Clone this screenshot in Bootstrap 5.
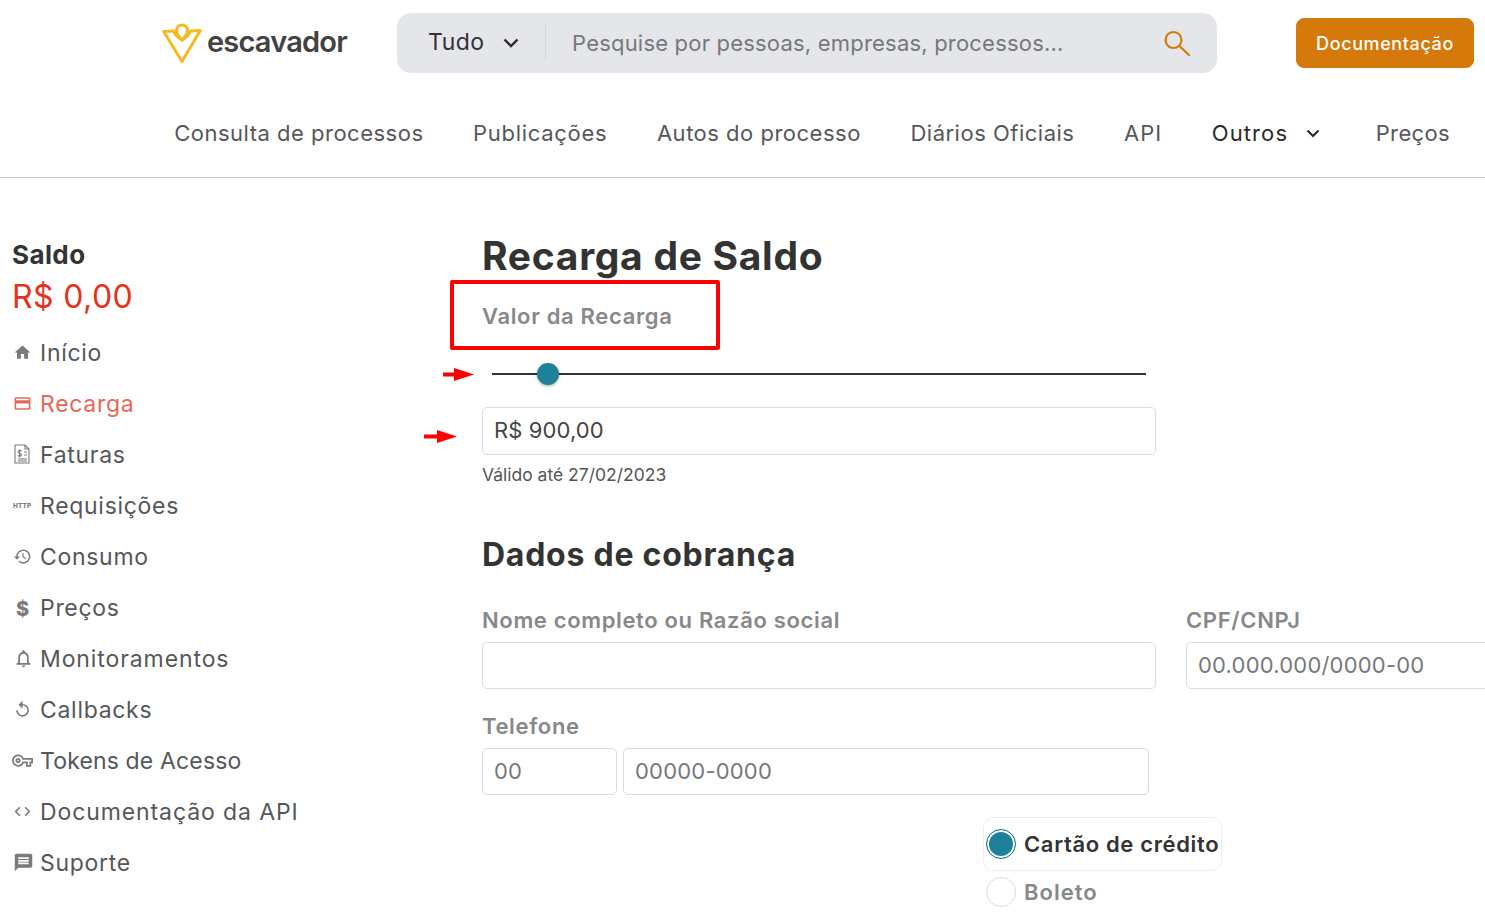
<!DOCTYPE html>
<html lang="pt-BR">
<head>
<meta charset="utf-8">
<title>Recarga de Saldo</title>
<link href="https://cdn.jsdelivr.net/npm/bootstrap@5.3.0/dist/css/bootstrap.min.css" rel="stylesheet">
<style>
html,body{height:916px;overflow:hidden}
body{font-family:"Inter","Liberation Sans",sans-serif;font-size:22px;letter-spacing:.4px;color:#333;background:#fff;position:relative;width:1485px}
.top-row{height:86px;padding-left:162px}
.logo-box{width:235px;gap:5px}
.logo-word{font-size:29px;font-weight:600;color:#424242;letter-spacing:-.8px;line-height:1;margin-top:-3px}
.search-box{width:820px;height:60px;background:#e5e6ea;border-radius:14px;margin-top:-1px}
.search-cat{width:149px;padding-left:31px;color:#333;gap:18px;border-right:1px solid #d3d4d8;height:36px;font-size:23px;letter-spacing:.5px}
.search-text{padding-left:26px;padding-top:2px;color:#77787c;flex:1;letter-spacing:.2px}
.search-ico{margin-right:27px}
.doc-btn{width:178px;height:50px;margin-left:79px;background:#d4790a;border-color:#d4790a;color:#fff;font-size:18px;letter-spacing:.6px;font-weight:500;border-radius:8px;padding:0}
.nav-row{height:92px;border-bottom:1px solid #c6c8cc;padding-right:35px;padding-top:4px;gap:49.6px}
.nav-lnk{color:#56575b;text-decoration:none;white-space:nowrap;padding:0;letter-spacing:.5px}
.nav-lnk.wide-a{letter-spacing:.7px}
.nav-lnk.wide-b{letter-spacing:1px}
.nav-lnk.last-p{letter-spacing:.35px}
.nav-lnk.outros{color:#2b2b2b;gap:18px;margin-right:6px;letter-spacing:1.1px}
.layout{padding-top:50px}
.side-col{width:482px;flex:none;padding-left:12px}
.saldo-t{font-size:26px;font-weight:700;color:#333;line-height:30px;margin-top:12px}
.saldo-v{font-size:32px;color:#e5321e;line-height:40px;margin-top:7px;margin-bottom:11px}
.side-item{height:51px;color:#56575b;text-decoration:none;white-space:nowrap;font-size:23px;letter-spacing:.7px}
.side-item.on{color:#e4685a}
.side-item.tight{letter-spacing:.15px}
.side-item.loose{letter-spacing:.9px}
.side-ico{width:28px;flex:none;color:#7b7b7b;display:flex;align-items:center;padding-left:1px;margin-top:-3px;letter-spacing:0}
.on .side-ico{color:#e4685a}
.http-ico{font-size:6.5px;font-weight:800;letter-spacing:.1px;color:#7b7b7b;margin-top:3px}
.dollar-ico{font-size:20px;font-weight:800;padding-left:3px;line-height:1;margin-top:3px}
.key-ico{margin-left:-1px}
.main-col{width:1003px;flex:none}
.page-title{font-size:39px;font-weight:700;color:#333;line-height:46px;margin:5px 0 0;letter-spacing:.7px}
.fld-label{font-size:22px;font-weight:600;color:#87888a;line-height:28px;margin:0;letter-spacing:.65px}
.val-label{margin-top:23px;margin-bottom:33px}
.range-wrap{width:674px;padding-left:10px;padding-right:10px;height:22px;margin-bottom:22px}
.range-wrap .form-range{display:block;height:22px;padding:0}
.form-range::-webkit-slider-runnable-track{height:2px;background:#333;border-radius:0}
.form-range::-webkit-slider-thumb{width:22px;height:22px;margin-top:-10px;background:#1f8199;box-shadow:0 1px 3px rgba(0,0,0,.35);border-radius:50%}
.txt-in{height:47px;border:1px solid #dcdcdc;border-radius:5px;font-size:22px;letter-spacing:.2px;padding:0 11px 2px;color:#444;box-shadow:none}
.txt-in.tall{height:48px;letter-spacing:.1px}
.txt-in::placeholder{color:#77787c;opacity:1}
.w-main{width:674px;flex:none}
.valid-note{font-size:17.5px;letter-spacing:0;color:#555;line-height:24px;margin-top:8px}
.sec-title{font-size:32px;font-weight:700;color:#333;line-height:38px;margin:49px 0 0;letter-spacing:.75px}
.form-line{gap:30px;margin-top:32px}
.w-cpf{width:320px;flex:none}
.fld-label.mb8{margin-bottom:8px}
.tel-block{margin-top:23px}
.tel-line{gap:6px}
.w-ddd{width:135px;flex:none}
.w-tel{width:526px;flex:none}
.pay-list{margin-left:501px;margin-top:22px;width:239px}
.pay-opt{height:54px;gap:8px;padding-left:2px;border:1px dotted #dcdcdc;border-radius:10px;margin:0;font-size:22px;font-weight:600;letter-spacing:.65px;color:#333;white-space:nowrap;min-height:0}
.pay-opt.off{border-color:transparent;height:42px;color:#87888a;letter-spacing:1px}
.pay-opt .form-check-input{width:30px;height:30px;margin:0;float:none;flex:none;background:#fff;border:1px solid #dcdcdc;box-shadow:none;background-image:none}
.pay-opt .form-check-input:checked{border-color:#1f8199;background:#1f8199;box-shadow:inset 0 0 0 2px #fff}
.mark-box{position:absolute;left:450px;top:280px;width:270px;height:70px;border:4px solid #f00;border-radius:2px}
.mark-arrow{position:absolute}
</style>
</head>
<body>
<header>
  <div class="top-row d-flex align-items-center">
    <a class="logo-box d-flex align-items-center text-decoration-none" href="#">
      <svg width="40" height="40" viewBox="0 0 40 40" fill="none" stroke="#f5b921" stroke-width="3" stroke-linejoin="round" stroke-linecap="round"><path d="M1.700 8.500 11.500 8C13 12 16.500 15 20 17 23.500 15 27 12 28.500 8L38.300 7.500 20 38.500Z"/><path d="M20 2C16.800 2 14.500 4.300 14.500 7.500 14.500 11 17.500 14.500 20 17 22.500 14.500 25.500 11 25.500 7.500 25.500 4.300 23.200 2 20 2Z"/></svg>
      <span class="logo-word">escavador</span>
    </a>
    <div class="search-box d-flex align-items-center">
      <div class="search-cat d-flex align-items-center">
        <span>Tudo</span>
        <svg width="16" height="10" viewBox="0 0 16 10" fill="none" stroke="#2b2b2b" stroke-width="2.400"><path d="M1.500 1.500 8 8 14.500 1.500"/></svg>
      </div>
      <div class="search-text">Pesquise por pessoas, empresas, processos...</div>
      <svg class="search-ico" width="26" height="26" viewBox="0 0 26 26" fill="none" stroke="#d4790a" stroke-width="2.200" stroke-linecap="round"><circle cx="9.500" cy="10" r="8"/><path d="M15.500 16 25 25"/></svg>
    </div>
    <button class="btn doc-btn" type="button">Documentação</button>
  </div>
  <nav class="nav-row d-flex align-items-center justify-content-end">
    <a class="nav-lnk" href="#">Consulta de processos</a>
    <a class="nav-lnk wide-a" href="#">Publicações</a>
    <a class="nav-lnk" href="#">Autos do processo</a>
    <a class="nav-lnk" href="#">Diários Oficiais</a>
    <a class="nav-lnk wide-b" href="#">API</a>
    <a class="nav-lnk outros d-flex align-items-center" href="#">Outros
      <svg width="14" height="9" viewBox="0 0 14 9" fill="none" stroke="#2b2b2b" stroke-width="2.200"><path d="M1.500 1.500 7 7 12.500 1.500"/></svg>
    </a>
    <a class="nav-lnk last-p" href="#">Preços</a>
  </nav>
</header>
<div class="layout d-flex">
  <aside class="side-col">
    <div class="saldo-t">Saldo</div>
    <div class="saldo-v">R$ 0,00</div>
    <a class="side-item d-flex align-items-center" href="#"><span class="side-ico"><svg width="19" height="19" viewBox="0 0 24 24" fill="currentColor"><path d="M10 20v-6h4v6h5v-8h3L12 3 2 12h3v8z"/></svg></span>Início</a>
    <a class="side-item on d-flex align-items-center" href="#"><span class="side-ico"><svg width="19" height="19" viewBox="0 0 24 24" fill="currentColor"><path d="M20 4H4c-1.110 0-2 .89-2 2v12c0 1.110.89 2 2 2h16c1.110 0 2-.89 2-2V6c0-1.110-.89-2-2-2zm0 14H4v-6h16v6zm0-10H4V6h16v2z"/></svg></span>Recarga</a>
    <a class="side-item d-flex align-items-center" href="#"><span class="side-ico"><svg width="18" height="20" viewBox="0 0 18 20" fill="none" stroke="currentColor" stroke-width="1.100"><path d="M2 1h10l4 4v14H2Z"/><path d="M12 1v4h4M11 8h3M11 11h3M5 15h9M5 17h9"/><path d="M8.500 7C7.500 6 5 6.200 5 7.800 5 9.500 8.500 9 8.500 10.800 8.500 12.300 6 12.500 5 11.500M6.700 5.500v8"/></svg></span>Faturas</a>
    <a class="side-item d-flex align-items-center" href="#"><span class="side-ico"><span class="http-ico">HTTP</span></span>Requisições</a>
    <a class="side-item d-flex align-items-center" href="#"><span class="side-ico"><svg width="19" height="19" viewBox="0 0 24 24" fill="currentColor"><path d="M13 3a9 9 0 0 0-9 9H1l3.890 3.890.07.14L9 12H6c0-3.870 3.130-7 7-7s7 3.130 7 7-3.130 7-7 7c-1.930 0-3.680-.79-4.940-2.060l-1.420 1.420A8.954 8.954 0 0 0 13 21a9 9 0 0 0 0-18zm-1 5v5l4.280 2.540.72-1.210-3.500-2.080V8H12z"/></svg></span>Consumo</a>
    <a class="side-item d-flex align-items-center" href="#"><span class="side-ico"><span class="dollar-ico">$</span></span>Preços</a>
    <a class="side-item loose d-flex align-items-center" href="#"><span class="side-ico"><svg width="21" height="21" viewBox="0 0 24 24" fill="currentColor"><path d="M12 22c1.100 0 2-.9 2-2h-4c0 1.100.9 2 2 2zm6-6v-5c0-3.070-1.630-5.640-4.500-6.320V4c0-.83-.67-1.500-1.500-1.500s-1.500.67-1.500 1.500v.68C7.640 5.360 6 7.920 6 11v5l-2 2v1h16v-1l-2-2zm-2 1H8v-6c0-2.480 1.510-4.500 4-4.500s4 2.020 4 4.500v6z"/></svg></span>Monitoramentos</a>
    <a class="side-item d-flex align-items-center" href="#"><span class="side-ico"><svg width="19" height="19" viewBox="0 0 24 24" fill="currentColor"><path d="M12 5V1L7 6l5 5V7c3.310 0 6 2.690 6 6s-2.690 6-6 6-6-2.690-6-6H4c0 4.420 3.580 8 8 8s8-3.580 8-8-3.580-8-8-8z"/></svg></span>Callbacks</a>
    <a class="side-item tight d-flex align-items-center" href="#"><span class="side-ico"><svg class="key-ico" width="21" height="21" viewBox="0 0 24 24" fill="currentColor"><path d="M22 19h-6v-4h-2.680c-1.140 2.420-3.600 4-6.320 4-3.860 0-7-3.140-7-7s3.140-7 7-7c2.720 0 5.170 1.580 6.320 4H24v6h-2v4zm-4-2h2v-4h2v-2H11.940l-.23-.67C11.010 8.340 9.110 7 7 7c-2.760 0-5 2.240-5 5s2.240 5 5 5c2.110 0 4.010-1.340 4.710-3.330l.23-.67H18v4zM7 15c-1.650 0-3-1.350-3-3s1.350-3 3-3 3 1.350 3 3-1.350 3-3 3zm0-4c-.55 0-1 .45-1 1s.45 1 1 1 1-.45 1-1-.45-1-1-1z"/></svg></span>Tokens de Acesso</a>
    <a class="side-item loose d-flex align-items-center" href="#"><span class="side-ico"><svg width="19" height="19" viewBox="0 0 24 24" fill="currentColor"><path d="M9.400 16.600 4.800 12l4.600-4.600L8 6l-6 6 6 6 1.400-1.400zm5.200 0 4.600-4.600-4.600-4.600L16 6l6 6-6 6-1.400-1.400z"/></svg></span>Documentação da API</a>
    <a class="side-item d-flex align-items-center" href="#"><span class="side-ico"><svg width="21" height="21" viewBox="0 0 24 24" fill="currentColor"><path d="M20 2H4c-1.100 0-1.990.9-1.990 2L2 22l4-4h14c1.100 0 2-.9 2-2V4c0-1.100-.9-2-2-2zm-2 12H6v-2h12v2zm0-3H6V9h12v2zm0-3H6V6h12v2z"/></svg></span>Suporte</a>
  </aside>
  <main class="main-col">
    <h1 class="page-title">Recarga de Saldo</h1>
    <p class="fld-label val-label">Valor da Recarga</p>
    <div class="range-wrap"><input class="form-range" type="range" min="200" max="10000" step="100" value="900" aria-label="Valor da Recarga"></div>
    <input class="form-control txt-in tall w-main" type="text" value="R$ 900,00" aria-label="Valor">
    <div class="valid-note">Válido até 27/02/2023</div>
    <h2 class="sec-title">Dados de cobrança</h2>
    <div class="form-line d-flex">
      <div class="w-main"><label class="fld-label mb8 d-block">Nome completo ou Razão social</label><input class="form-control txt-in" type="text"></div>
      <div class="w-cpf"><label class="fld-label mb8 d-block">CPF/CNPJ</label><input class="form-control txt-in" type="text" placeholder="00.000.000/0000-00"></div>
    </div>
    <div class="tel-block">
      <label class="fld-label mb8 d-block">Telefone</label>
      <div class="tel-line d-flex">
        <input class="form-control txt-in w-ddd" type="text" placeholder="00" aria-label="DDD">
        <input class="form-control txt-in w-tel" type="text" placeholder="00000-0000" aria-label="Número">
      </div>
    </div>
    <div class="pay-list">
      <label class="form-check pay-opt d-flex align-items-center"><input class="form-check-input" type="radio" name="pay" checked>Cartão de crédito</label>
      <label class="form-check pay-opt off d-flex align-items-center"><input class="form-check-input" type="radio" name="pay">Boleto</label>
    </div>
  </main>
</div>
<div class="mark-box"></div>
<svg class="mark-arrow" style="left:443px;top:367px" width="32" height="15" viewBox="0 0 32 15" fill="#f00"><path d="M0 5.500h11V1l20 6.500L11 14V9.500H0Z"/></svg>
<svg class="mark-arrow" style="left:424px;top:429px" width="34" height="15" viewBox="0 0 34 15" fill="#f00"><path d="M0 5.500h13V1l20 6.500L13 14V9.500H0Z"/></svg>
</body>
</html>
